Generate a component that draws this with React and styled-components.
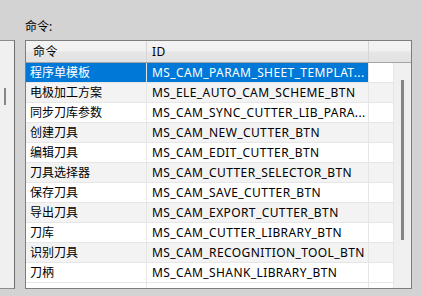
import React from 'react';
import styled, { createGlobalStyle } from 'styled-components';

const GlobalStyle = createGlobalStyle`
	html, body {
		margin: 0;
		padding: 0;
		background: #d3d3d3;
	}
	body {
		font-family: 'Noto Sans', 'Noto Sans CJK SC', sans-serif;
		font-size: 12px;
		color: #000;
	}
`;

// ids shown as the list draws them (long ones are clipped by the column)
const commands = [
	{ name: '程序单模板', id: 'MS_CAM_PARAM_SHEET_TEMPLAT...' },
	{ name: '电极加工方案', id: 'MS_ELE_AUTO_CAM_SCHEME_BTN' },
	{ name: '同步刀库参数', id: 'MS_CAM_SYNC_CUTTER_LIB_PARA...' },
	{ name: '创建刀具', id: 'MS_CAM_NEW_CUTTER_BTN' },
	{ name: '编辑刀具', id: 'MS_CAM_EDIT_CUTTER_BTN' },
	{ name: '刀具选择器', id: 'MS_CAM_CUTTER_SELECTOR_BTN' },
	{ name: '保存刀具', id: 'MS_CAM_SAVE_CUTTER_BTN' },
	{ name: '导出刀具', id: 'MS_CAM_EXPORT_CUTTER_BTN' },
	{ name: '刀库', id: 'MS_CAM_CUTTER_LIBRARY_BTN' },
	{ name: '识别刀具', id: 'MS_CAM_RECOGNITION_TOOL_BTN' },
	{ name: '刀柄', id: 'MS_CAM_SHANK_LIBRARY_BTN' }
];

export default function App() {
	return (
		<Page>
			<GlobalStyle />
			<LeftPane>
				<LeftThumb />
			</LeftPane>
			<Main>
				<Label>命令:</Label>
				<Frame>
					<Header>
						<HeadCell width={121} pad={7}>命令</HeadCell>
						<HeadCell width={222} pad={5}>ID</HeadCell>
						<HeadFill />
					</Header>
					<Body>
						<Rows>
							{commands.map((c, i) => (
								<Row key={c.id} odd={i % 2 === 1}>
									<Cell width={121} pad={4} selected={i === 0}>
										{c.name}
									</Cell>
									<IdCell width={222} pad={5} selected={i === 0}>
										{c.id}
									</IdCell>
									<Cell width={25} />
								</Row>
							))}
							<Row>
								<Cell width={121} />
								<Cell width={222} />
								<Cell width={25} />
							</Row>
						</Rows>
						<Track>
							<Thumb />
						</Track>
					</Body>
				</Frame>
			</Main>
		</Page>
	);
}

const Page = styled.div`
	display: flex;
	width: 421px;
	height: 296px;
	overflow: hidden;
`;

const LeftPane = styled.div`
	box-sizing: border-box;
	width: 15px;
	height: 249px;
	margin-top: 40px;
	padding: 47px 0 0 4px;
	background: #f0f0f0;
	border: 1px solid #8c8c8c;
	border-left: none;
	border-right-color: #6e6e6e;
`;

const LeftThumb = styled.div`
	width: 2px;
	height: 17px;
	background: #868686;
`;

const Main = styled.div`
	display: flex;
	flex-direction: column;
	margin-left: 10px;
	padding-top: 17px;
`;

const Label = styled.div`
	height: 20px;
	line-height: 20px;
	margin-bottom: 3px;
`;

const Frame = styled.div`
	box-sizing: border-box;
	width: 387px;
	height: 249px;
	border: 1px solid #7d7d7d;
	background: #fff;
	display: flex;
	flex-direction: column;
	overflow: hidden;
`;

const Header = styled.div`
	display: flex;
	flex: none;
	height: 21px;
	border-bottom: 1px solid #a5a5a5;
	background: linear-gradient(
		to bottom,
		#f3f3f3 0%,
		#f1f1f1 45%,
		#e5e5e5 55%,
		#e3e3e3 100%
	);
`;

const HeadCell = styled.div`
	box-sizing: border-box;
	width: ${p => p.width}px;
	padding-left: ${p => p.pad}px;
	line-height: 21px;
	border-right: 1px solid #d5d5d5;
	white-space: nowrap;
	letter-spacing: 0.4px;
`;

const HeadFill = styled.div`
	flex: 1;
`;

const Body = styled.div`
	display: flex;
	flex: 1;
	min-height: 0;
`;

const Rows = styled.div`
	width: 368px;
	overflow: hidden;
`;

const Row = styled.div`
	display: flex;
	height: 19px;
	border-bottom: 1px solid #e6e6e6;
	background: ${p => (p.odd ? '#f3f3f3' : '#fff')};
`;

const Cell = styled.div`
	box-sizing: border-box;
	width: ${p => p.width}px;
	padding-left: ${p => p.pad || 0}px;
	line-height: 19px;
	border-right: 1px solid #e6e6e6;
	white-space: nowrap;
	overflow: hidden;
	background: ${p => (p.selected ? '#0078d7' : 'transparent')};
	color: ${p => (p.selected ? '#fff' : '#000')};
`;

const IdCell = styled(Cell)`
	letter-spacing: 0.4px;
`;

const Track = styled.div`
	width: 17px;
	background: #f0f0f0;
	padding: 17px 0 0 7px;
	box-sizing: border-box;
`;

const Thumb = styled.div`
	width: 3px;
	height: 160px;
	background: #868686;
`;
